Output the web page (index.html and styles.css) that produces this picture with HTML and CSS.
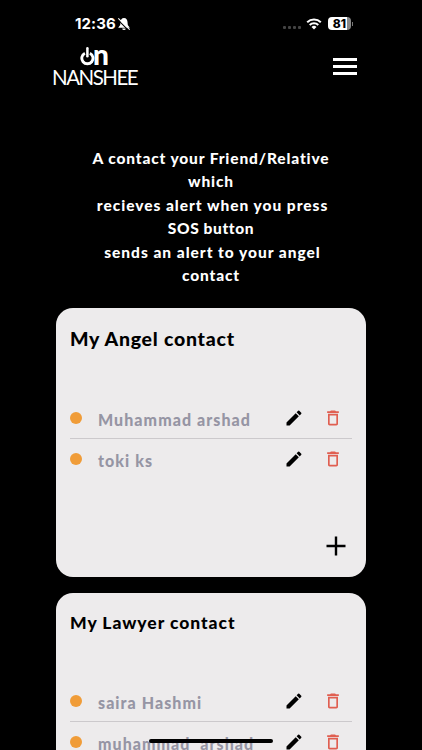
FILE: index.html
```html
<!DOCTYPE html>
<html lang="en">
<head>
  <meta charset="UTF-8">
  <meta name="viewport" content="width=device-width, initial-scale=1.0">
  <title>Nanshee</title>
  <link rel="stylesheet" href="styles.css">
</head>
<body>

  <svg class="sprite">
    <symbol id="edit" viewBox="0 0 24 24">
      <path d="M3 17.25V21h3.75L17.81 9.94l-3.75-3.75L3 17.25zM20.71 7.04c.39-.39.39-1.02 0-1.41l-2.34-2.34a1 1 0 0 0-1.41 0l-1.83 1.83 3.75 3.75 1.83-1.83z"/>
    </symbol>
    <symbol id="trash" viewBox="0 0 24 24">
      <path d="M6 19c0 1.1.9 2 2 2h8c1.1 0 2-.9 2-2V7H6v12zM8 9h8v10H8V9zm7.5-5l-1-1h-5l-1 1H5v2h14V4h-3.5z"/>
    </symbol>
  </svg>

  <div class="status-bar">
    <div class="time">12:36
      <svg class="bell" viewBox="0 0 14 14">
        <path d="M7 1C4.7 1 3.6 2.8 3.5 5L3.2 8 1.2 10.8h11.6L10.8 8l-.3-3C10.4 2.8 9.3 1 7 1z" fill="#fff"/>
        <path d="M5.2 11.5h3.6a1.8 1.5 0 0 1-3.6 0z" fill="#fff"/>
        <path d="M1 2.8l11 11" stroke="#000" stroke-width="1.2"/>
        <path d="M1.3 1.4l11.4 11.2" stroke="#fff" stroke-width="1.1"/>
      </svg>
    </div>
    <div class="status-icons">
      <div class="signal"><span></span><span></span><span></span><span></span></div>
      <svg class="wifi" viewBox="0 0 16 12">
        <path d="M1.2 4.2a9.8 9.8 0 0 1 13.6 0M3.7 7a6.2 6.2 0 0 1 8.6 0" fill="none" stroke="#fff" stroke-width="2"/>
        <path d="M5.5 9a3.6 3.6 0 0 1 5 0L8 11.5z" fill="#fff"/>
      </svg>
      <div class="battery">81</div>
      <span class="battery-tip"></span>
    </div>
  </div>

  <header>
    <div class="logo">
      <div class="logo-on">
        <svg class="power" viewBox="0 0 15 19">
          <path d="M4.9 6.2a5.6 5.6 0 1 0 5 0" fill="none" stroke="#fff" stroke-width="2.9"/>
          <path d="M7.4 1.3v8" stroke="#fff" stroke-width="2.5" stroke-linecap="round"/>
        </svg>
        <span>n</span>
      </div>
      <div class="logo-name">NANSHEE</div>
    </div>
    <div class="menu"><span></span><span></span><span></span></div>
  </header>

  <p class="intro">
    A contact your Friend/Relative<br>
    which<br>
    <span class="wide">recieves alert when you press</span><br>
    <span class="narrow">SOS button</span><br>
    <span class="wide">sends an alert to your angel</span><br>
    contact
  </p>

  <main>
    <section class="card">
      <h2>My Angel contact</h2>
      <div class="contact">
        <span class="dot"></span>
        <span class="name">Muhammad arshad</span>
        <svg class="edit"><use href="#edit"/></svg>
        <svg class="trash"><use href="#trash"/></svg>
      </div>
      <div class="contact">
        <span class="dot"></span>
        <span class="name">toki ks</span>
        <svg class="edit"><use href="#edit"/></svg>
        <svg class="trash"><use href="#trash"/></svg>
      </div>
      <svg class="add" viewBox="0 0 20 20"><path d="M10 .5v19M.5 10h19" stroke="#000" stroke-width="2.4"/></svg>
    </section>

    <section class="card lawyer">
      <h2>My Lawyer contact</h2>
      <div class="contact">
        <span class="dot"></span>
        <span class="name">saira Hashmi</span>
        <svg class="edit"><use href="#edit"/></svg>
        <svg class="trash"><use href="#trash"/></svg>
      </div>
      <div class="contact">
        <span class="dot"></span>
        <span class="name">muhammad&nbsp; arshad</span>
        <svg class="edit"><use href="#edit"/></svg>
        <svg class="trash"><use href="#trash"/></svg>
      </div>
    </section>
  </main>

  <div class="home-bar"></div>

</body>
</html>
```
FILE: styles.css
```css
* {
  box-sizing: border-box;
}

body {
  margin: 0;
  height: 750px;
  overflow: hidden;
  background: #000;
  color: #fff;
  font-family: Lato, sans-serif;
}

.sprite {
  display: none;
}

.status-bar {
  display: flex;
  justify-content: space-between;
  height: 47px;
  padding: 15px 69px 0 75px;
  font-family: Inter, sans-serif;
}

.time {
  display: flex;
  align-items: center;
  height: 17px;
  font-size: 15px;
  font-weight: 700;
  letter-spacing: 0.1px;
}

.bell {
  width: 14px;
  height: 14px;
  margin-left: 1px;
}

.status-icons {
  display: flex;
  align-items: center;
  height: 17px;
}

.signal {
  display: flex;
  gap: 2px;
  margin: 8px 5px 0 0;
}

.signal span {
  width: 3px;
  height: 3px;
  border-radius: 1px;
  background: #444;
}

.wifi {
  width: 16px;
  height: 12px;
  margin-right: 6px;
}

.battery {
  width: 23px;
  height: 13px;
  border-radius: 4px;
  background: linear-gradient(90deg, #fff 81%, #888 81%);
  color: #000;
  font-size: 12px;
  font-weight: 800;
  line-height: 13px;
  text-align: center;
}

.battery-tip {
  width: 1px;
  height: 4px;
  margin-left: 1px;
  background: #777;
}

header {
  display: flex;
  justify-content: space-between;
  height: 100px;
  padding: 0 65px 0 52px;
}

.logo {
  width: 87px;
}

.logo-on {
  display: flex;
  height: 20px;
  padding-left: 28px;
  font-size: 28px;
  font-weight: 900;
  line-height: 15px;
}

.logo-on span {
  margin-left: -2px;
}

.power {
  width: 15px;
  height: 19px;
}

.logo-name {
  font-size: 20.5px;
  line-height: 21px;
  letter-spacing: -1.5px;
  white-space: nowrap;
}

.menu {
  display: flex;
  flex-direction: column;
  gap: 4px;
  width: 24px;
  padding-top: 11px;
}

.menu span {
  height: 3px;
  background: #fff;
}

.intro {
  height: 161px;
  margin: 0;
  font-size: 15.5px;
  font-weight: 900;
  line-height: 23.4px;
  letter-spacing: 0.85px;
  text-align: center;
}

.intro .wide {
  padding-left: 3px;
  letter-spacing: 0.97px;
}

.intro .narrow {
  letter-spacing: 0.6px;
}

main {
  display: flex;
  flex-direction: column;
  gap: 16px;
  padding: 0 56px;
}

.card {
  display: flex;
  flex-direction: column;
  height: 269px;
  flex-shrink: 0;
  padding: 17px 14px 0;
  border-radius: 17px;
  background: #edebec;
}

h2 {
  height: 73px;
  margin: 0;
  color: #000;
  font-size: 19.5px;
  font-weight: 900;
  line-height: 28px;
  letter-spacing: 0.75px;
}

.lawyer {
  padding-top: 16px;
}

.lawyer h2 {
  height: 72.5px;
  font-size: 17.5px;
  line-height: 27px;
  letter-spacing: 0.95px;
}

.contact {
  display: flex;
  align-items: center;
  height: 41px;
  border-bottom: 1px solid #ccc9cc;
}

.contact + .contact {
  height: 40px;
  border-bottom: none;
}

.lawyer .contact {
  height: 40.5px;
}

.dot {
  width: 12px;
  height: 12px;
  border-radius: 50%;
  background: #f09c38;
}

.name {
  flex: 1;
  margin: 2px 0 0 16px;
  color: #9695a4;
  font-size: 16px;
  font-weight: 900;
  letter-spacing: 1.05px;
}

.edit {
  width: 20px;
  height: 20px;
  fill: #000;
}

.trash {
  width: 20px;
  height: 20px;
  margin: 0 9px 0 19px;
  fill: #e05e50;
}

.add {
  align-self: flex-end;
  width: 20px;
  height: 20px;
  margin: 57px 6px 0 0;
}

.home-bar {
  position: absolute;
  left: 149px;
  bottom: 7px;
  width: 124px;
  height: 4px;
  border-radius: 2px;
  background: #000;
}
```
